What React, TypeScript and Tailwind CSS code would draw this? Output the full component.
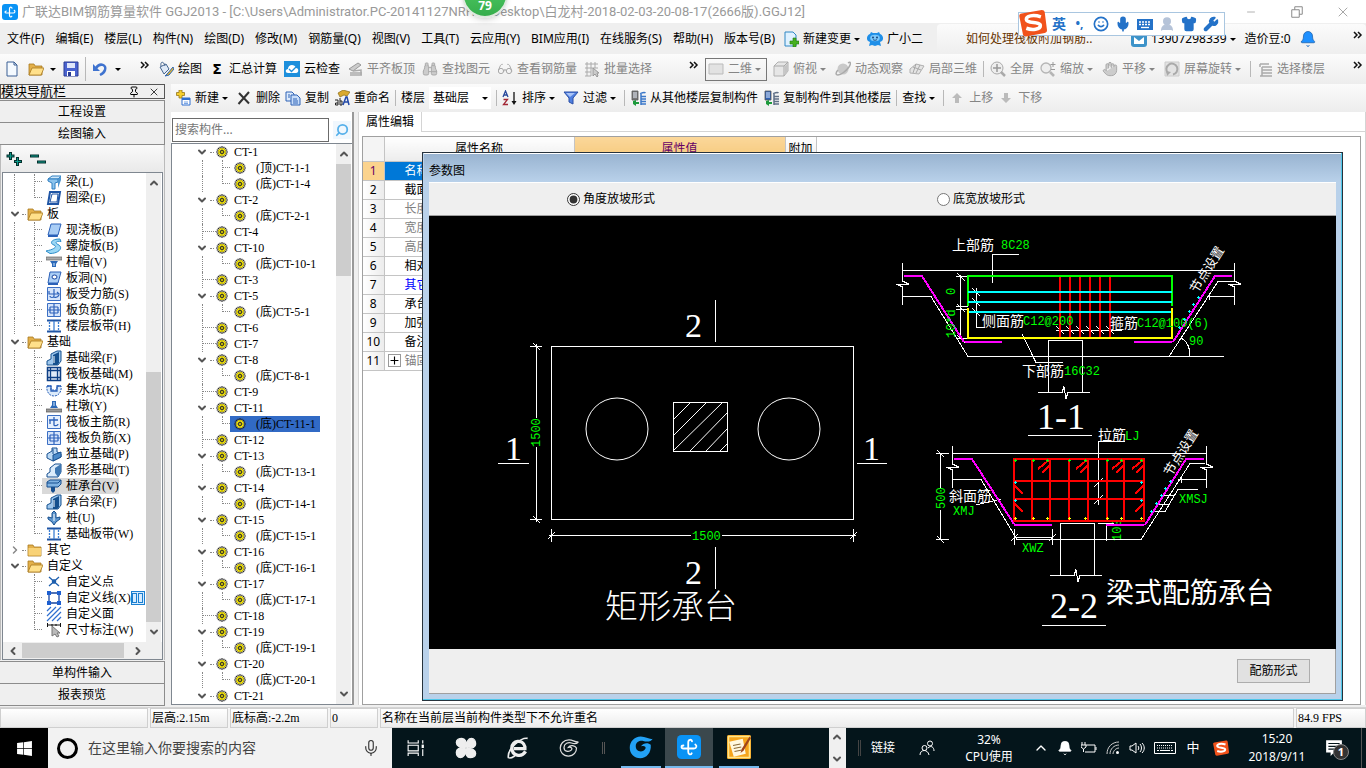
import { useState, type ReactNode } from 'react';
import {
  Bell, Binoculars, ChevronDown, ChevronLeft, ChevronRight, ChevronUp,
  Glasses, Hand, Keyboard, Mic, Minus, Pin, Search,
  Shirt, Smile, UserRound, Wrench, X,
} from 'lucide-react';
import { FaWindows } from 'react-icons/fa';

const SIM = "font-['Liberation_Serif','Noto_Sans_CJK_SC',serif]";

/* ---------- icons ---------- */

const Svg = ({ children, className = 'size-4' }: { children: ReactNode; className?: string }) => (
  <svg viewBox="0 0 16 16" fill="none" className={`${className} shrink-0`} aria-hidden="true">{children}</svg>
);

const Caret = ({ className = '' }: { className?: string }) => (
  <svg viewBox="0 0 12 16" className={`h-4 w-3 shrink-0 ${className}`} aria-hidden="true">
    <path d="M3 7h6l-3 3z" fill="currentColor" />
  </svg>
);

const Logo = ({ className = 'size-4' }: { className?: string }) => (
  <Svg className={className}>
    <rect width="16" height="16" rx="3" fill="#0a93f5" />
    <path d="M10 4.200C9.800 2.700 7.500 2.800 7.500 4.800v6.500c0 1.800 1.800 2 2.300.9" stroke="#fff" strokeWidth="1.200" strokeLinecap="round" />
    <path d="M4.300 7C2.600 7 2.600 9 4.300 9h6.900c2 0 2.200-2 1-2.700" stroke="#fff" strokeWidth="1.200" strokeLinecap="round" />
  </Svg>
);

const Gear = () => (
  <Svg className="size-3">
    <path d="M8 0v16M0 8h16M2.500 2.500l11 11M13.500 2.500l-11 11M5 1l6 14M11 1L5 15M1 5l14 6M15 5L1 11" stroke="#222" strokeWidth="1.500" />
    <circle cx="8" cy="8" r="5.200" fill="#ffee00" />
    <path d="M8 3v10M3 8h10M4.500 4.500l7 7M11.500 4.500l-7 7" stroke="#554" strokeWidth=".9" />
    <circle cx="8" cy="8" r="2" fill="#ffee00" stroke="#222" strokeWidth="1.300" />
  </Svg>
);

const Folder = ({ open }: { open?: boolean }) => (
  <Svg>
    <path d="M1 3h5l1 2h7v9H1z" fill="#e3b04a" stroke="#a8791f" strokeWidth=".8" />
    {open ? <path d="M4 7h12l-3 7H1z" fill="#ffe08a" stroke="#a8791f" strokeWidth=".8" /> : <path d="M1.500 6h12.500v7.500H1.500z" fill="#f8d277" />}
  </Svg>
);

const icons: Record<string, ReactNode> = {
  beam: <><path d="M2 5l4-3h9l-3 3z" fill="#cfe8fb" stroke="#2f7fc1" /><path d="M2 5h10v3l-3 1v6H6V9L2 7z" fill="#8cc4ee" stroke="#2f7fc1" /><path d="M12 5l3-3v4l-3 8z" fill="#4f95cf" /></>,
  ring: <><path d="M4 2h10l-2 12H2z" fill="#fff" stroke="#1f55a5" strokeWidth="2" /><path d="M6 4h6l-1 8H4z" stroke="#1f55a5" /></>,
  slab: <><path d="M5 2h10l-3 11H2z" fill="#a9cdf5" stroke="#2a60b8" /><path d="M2 13h10l-.3 2H2z" fill="#2a60b8" /></>,
  spiral: <path d="M14 1C4 1 4 6 8 7c3 1 2 4-8 6l4 2.500c9 0 14-6 8-9-4-2-1-4 3-3z" fill="#9ad7f5" stroke="#2b8cc9" />,
  cap: <><path d="M0 3h16v3H0z" fill="#aaa" stroke="#666" strokeWidth=".7" /><path d="M4 7h8l-2 3v3H6v-3z" fill="#2c69b8" /><path d="M7.500 9h1v3h-1z" fill="#cfe8fb" /></>,
  hole: <><path d="M4 2h11l-3 11H2z" fill="#a9cdf5" stroke="#2a60b8" /><path d="M2 13h10v2H2z" fill="#2a60b8" /><ellipse cx="8.500" cy="7" rx="2.500" ry="2" fill="#fff" stroke="#1746a0" /></>,
  rebar: <><path d="M1.500 1.500h13v13h-13z" fill="#d6e5fb" stroke="#3b6fc4" /><path d="M3 5v3h10l-2-2M8 3v7c0 2-4 2-4 0M8 11c2 1 4 0 5-2" stroke="#2c61ba" strokeWidth="1.200" /></>,
  negbar: <><path d="M1.500 1.500h13v13h-13z" fill="#d6e5fb" stroke="#3b6fc4" /><path d="M2 8h12M8 2v12M4 5h8M4 5v6M12 5v6M4 11h8" stroke="#2c61ba" strokeWidth="1.200" /></>,
  strip: <><path d="M1 2.500h14M1 13.500h14" stroke="#1f55a5" strokeWidth="2" /><path d="M3.500 4v9M12.500 4v9" stroke="#3b7fd4" strokeWidth="1.300" strokeDasharray="2 1" /><path d="M8 3v10" stroke="#3b7fd4" strokeWidth="1.300" /></>,
  fbeam: <><path d="M1 15v-4l4-2V4l6-3h4v10l-3 4z" fill="#9fc8ee" stroke="#15508e" /><path d="M7 5l6-3v11l-2 2H7z" fill="#15508e" /><path d="M8 6v7" stroke="#fff" /></>,
  raft: <><path d="M1.500 1.500h13v13h-13z" fill="#dfeaf8" stroke="#0d3f85" strokeWidth="1.500" /><path d="M4.500 1v14M11.500 1v14M1 4.500h14M1 11.500h14" stroke="#0d3f85" strokeWidth="1.300" /></>,
  sump: <><path d="M1 4h4v4h6V4h4c1 5-2 10-7 10S0 9 1 4z" fill="#dbeafa" stroke="#2a60b8" strokeDasharray="2 1" /><path d="M1 4h4v5h6V4h4" stroke="#2a60b8" strokeWidth="1.300" /></>,
  pier: <><path d="M0 11h16v3H0z" fill="#999" stroke="#555" strokeWidth=".7" /><path d="M6 3h4v4l2 3H4l2-3z" fill="#2c69b8" /><path d="M7.500 4h1v4h-1z" fill="#cfe8fb" /></>,
  mainbar: <><path d="M1.500 1.500h13v13h-13z" fill="#e6f0fd" stroke="#3b6fc4" /><path d="M3 6h9M8 3v8c0 1 4 1 4-1M4 10V6" stroke="#2c61ba" strokeWidth="1.300" /></>,
  single: <><path d="M1 8l5-3V2h5v4l4 2v3l-8 4-6-3z" fill="#bcdaf5" stroke="#174f8f" /><path d="M7 15V9l8-3v5zM7 3v5" fill="#4b8ac9" stroke="#174f8f" /></>,
  stripf: <><path d="M1 15v-3l3-2V6l5-4h6v8l-3 5z" fill="#dcecfb" stroke="#174f8f" /><path d="M9 6l6-4v9l-3 4-3-4z" fill="#3f78b3" /></>,
  pilecap: <><path d="M1 4l3-2h11v4l-3 3H1z" fill="#7fb2e2" stroke="#174f8f" /><path d="M1 5h11l3-3" stroke="#174f8f" /><path d="M5 9h4v4l-2 2-2-2z" fill="#174f8f" /></>,
  pile: <><path d="M8 1l2 2v5l4-1v2l-4 3-2 3-2-3-4-3V7l4 1V3z" fill="#5f97cf" stroke="#174f8f" /><path d="M8 4v7" stroke="#fff" /></>,
  point: <path d="M3 3l10 9M13 3L3 12M6.500 6h3v3h-3z" stroke="#1d5fae" strokeWidth="1.300" />,
  line: <><path d="M3 3h10v10H3z" stroke="#1746a0" strokeWidth="1.300" /><path d="M1 1h4v4H1zM11 1h4v4h-4zM1 11h4v4H1zM11 11h4v4h-4z" fill="#1d5fd0" /></>,
  area: <path d="M1 5l4-4M1 10l9-9M1 15L15 1M6 15l9-9M11 15l4-4" stroke="#2f6fd0" strokeWidth="1.200" />,
  dim: <><path d="M1 3h14M1.500 1v4M14.500 1v4M6 2v2M10 2v2" stroke="#111" /><path d="M6 4v10l3-2 2 3 2-1-2-3h3z" fill="#bbb" stroke="#777" /></>,
};

const IconNew = () => <Svg><path d="M3 1h7l3 3v11H3z" fill="#f5faff" stroke="#3a5f94" /><path d="M10 1v3h3" stroke="#3a5f94" /></Svg>;
const IconSave = () => <Svg><path d="M1 1h14v14H1z" fill="#4a63cf" stroke="#2a3c94" /><path d="M4 2h8v5H4z" fill="#dfe6fa" /><path d="M4 10h8v5H4z" fill="#fff" /><path d="M5 11h3v4H5z" fill="#2a3c94" /></Svg>;
const IconUndo = () => <Svg><path d="M4 7c4-6 11-3 9 2-1 3-3 4-5 5" stroke="#3f73cf" strokeWidth="2.500" /><path d="M1 3v7h7z" fill="#3f73cf" /></Svg>;
const IconDraw = () => <Svg><path d="M2 6l6-3 3 5-5 5z" fill="#dfe9f6" stroke="#44648f" /><path d="M3 5c-1-5 3-5 4 0" stroke="#44648f" /><path d="M15 6l-5 6-3 3 4-1 5-6z" fill="#e5b52c" stroke="#2e65b5" /></Svg>;
const IconCloud = () => <Svg><path d="M0 0h16v16H0z" fill="#1d8fdc" /><path d="M4 12c-3 0-3-4 0-4 0-5 7-5 8-1 3 0 3 5 0 5z" fill="#fff" /><path d="M5 8l2.500 2.500L12 6" stroke="#1d8fdc" strokeWidth="1.300" /></Svg>;
const IconAlign = () => <Svg><path d="M2 8l9-6 3 2-8 6z" fill="#ccc" stroke="#999" /><path d="M3 12h12M3 14h12M6 10l8-1v5" stroke="#aaa" strokeWidth="1.500" /></Svg>;
const IconBatch = () => <Svg><path d="M1 3h13M1 7h13M1 11h6M1 15h6M3 1v14M7 1v14M11 1v6" stroke="#aaa" /><path d="M9 7v8l2-2 2 3 1-1-1-3h2z" fill="#ccc" stroke="#999" /></Svg>;
const IconCube = () => <Svg><path d="M1 5l4-4h10v9l-4 5H1z" fill="#e6e6e6" stroke="#b0b0b0" /><path d="M1 5h10v10M11 5l4-4" stroke="#a8a8a8" /><path d="M12 5l3-3v8l-3 4z" fill="#c4c4c4" /></Svg>;
const IconOrbit = () => <Svg><circle cx="8" cy="8" r="5.500" fill="#c9c9c9" /><path d="M13 2c3-2 3 1 1 4-3 4-8 8-11 8s-2-3 0-5" stroke="#aaa" strokeWidth="1.500" /></Svg>;
const IconPart = () => <Svg><path d="M1 8l6-5 8 2-5 8-9-1z" fill="#e4e4e4" stroke="#b0b0b0" /><path d="M4 6l8 3M7 3l-3 9M11 4l-4 8" stroke="#a8a8a8" /></Svg>;
const IconFull = () => <Svg><circle cx="7" cy="7" r="6" fill="#eee" stroke="#aaa" /><path d="M7 3v8M3 7h8" stroke="#999" strokeWidth="1.500" /><path d="M11 11l4 4" stroke="#aaa" strokeWidth="2.500" /></Svg>;
const IconZoom = () => <Svg><circle cx="6" cy="7" r="5" fill="#eee" stroke="#b5b5b5" strokeWidth="1.300" /><path d="M10 11l4 4" stroke="#b5b5b5" strokeWidth="2.500" /><path d="M13 1v5M10.500 3.500h5M11 8.500h4" stroke="#999" /></Svg>;
const IconRotate = () => <Svg><path d="M1 1h14v14H1z" fill="#e3e3e3" stroke="#ccc" /><path d="M4 12A5.500 5.500 0 1 1 9 13.500" stroke="#aaa" strokeWidth="2" /><path d="M2 10l5 1-4 4z" fill="#aaa" /></Svg>;
const IconCreate = () => <Svg><path d="M4 0h3v2.500h2.500v3H7V8H4V5.500H1.500v-3H4z" fill="#f5cf2e" stroke="#94761a" strokeWidth=".8" /><path d="M7 8h8v7H7z" fill="#fff" stroke="#2f6fd0" /><path d="M7 8h8v2H7z" fill="#2f6fd0" /><path d="M9 12h4M9 13.500h4" stroke="#7aa6e6" /></Svg>;
const IconDelete = () => <Svg><path d="M3 3l10 10.500M13 2L2.500 14" stroke="#333" strokeWidth="2" /></Svg>;
const IconCopy = () => <Svg><path d="M1 2h6l2 2v7H1z" fill="#dceafc" stroke="#2f62b5" /><path d="M6 5h6l3 3v7H6z" fill="#c7ddfa" stroke="#2f62b5" /><path d="M8 9h4M8 11h5M8 13h5M3 5h2M3 7h2" stroke="#2f62b5" /></Svg>;
const IconRename = () => <Svg><path d="M4 3l5-3 7 2-3 4-3-1-4 2z" fill="#d9a92f" stroke="#8a6a16" strokeWidth=".7" /><path d="M1 10h3v5H1.500v-2H4M6 8v7h2v-4H6" stroke="#222" /><path d="M9 15l3-8h1l2 8M10 12h4" stroke="#2349a8" strokeWidth="1.500" /></Svg>;
const IconFilter = () => <Svg><path d="M1 2h14l-5 6v6l-4-2V8z" fill="#4f7fe0" stroke="#2a4fa5" /><path d="M3 3h9L7 7z" fill="#a9c4f7" /></Svg>;
const IconSort = () => (
  <Svg>
    <path d="M1 7l2.500-6L6 7M2 5h3" stroke="#27489c" strokeWidth="1.300" />
    <path d="M1.500 9.500h4l-4 5h4.500" stroke="#a32836" strokeWidth="1.300" />
    <path d="M12 2v10" stroke="#111" strokeWidth="1.300" /><path d="M9.500 11h5L12 15z" fill="#111" />
  </Svg>
);
const IconFloorCopy = ({ blue }: { blue?: boolean }) => (
  <Svg>
    <path d="M2 1h6v9H2z" fill={blue ? '#2f62b5' : '#777'} stroke="#555" strokeWidth=".8" />
    <path d="M3 3h4M3 5h4M3 7h4" stroke="#e8eefb" />
    <path d="M10.500 4c0-1 4-2 5-1M11 6.500h5M11 9h5M11 11.500h5M11 14h5M11 4v11" stroke={blue ? '#5f6f85' : '#3b78c9'} strokeWidth="1.500" />
    <path d="M3 11l3-1v2h3v2H6v2l-3-2z" fill="#1d9a3c" />
  </Svg>
);
const IconArrow = ({ down }: { down?: boolean }) => (
  <Svg>{down ? <path d="M6 3h4v5h3l-5 5-5-5h3z" fill="#bbb" /> : <path d="M6 13h4V8h3L8 3 3 8h3z" fill="#bbb" />}</Svg>
);
const IconFloors = () => <Svg><path d="M3 3h9M5 6h10M5 9h10M5 12h10M3 15h12M3 3v3M5 6v9" stroke="#aaa" strokeWidth="1.500" /></Svg>;
const IconChange = () => <Svg><path d="M2 1h8l3 3v11H2z" fill="#dff1ff" stroke="#2f87c4" /><path d="M10 7h3v3h3v3h-3v3h-3v-3H7v-3h3z" fill="#46b01e" stroke="#1f7a10" strokeWidth=".6" /></Svg>;
const IconMascot = () => (
  <Svg>
    <path d="M3 3l1-2 2 1h4l2-1 1 2c3 1 4 5 2 7l-2 1 1 4-3-1-3 1-3-1-3 1 1-4-2-1C-1 8 0 4 3 3z" fill="#1f8fe8" />
    <ellipse cx="8" cy="7" rx="4.800" ry="3.300" fill="#7cc8fa" /><circle cx="6" cy="6.500" r=".9" fill="#0c3a75" /><circle cx="10" cy="6.500" r=".9" fill="#0c3a75" />
    <path d="M6 8.500c1 1 3 1 4 0" stroke="#0c3a75" strokeWidth=".8" />
  </Svg>
);
const Sogou = ({ className }: { className: string }) => (
  <Svg className={className}>
    <path d="M1.500 2.500L13 .5c1 0 1.500.5 1.700 1.300L16 12c0 1-.4 1.500-1.300 1.700L4 15.700c-1 .1-1.700-.5-1.800-1.400L.2 4.300C0 3.200.5 2.700 1.500 2.500z" fill="#f1521b" />
    <path d="M12.500 4.500C8 3 4 4 4.200 6c.3 2.500 8 1 8 3.500 0 2.200-4.700 2.700-8 1.500" stroke="#fff" strokeWidth="2" />
  </Svg>
);

/* ---------- data ---------- */

const menus = ['文件(F)', '编辑(E)', '楼层(L)', '构件(N)', '绘图(D)', '修改(M)', '钢筋量(Q)', '视图(V)', '工具(T)', '云应用(Y)', 'BIM应用(I)', '在线服务(S)', '帮助(H)', '版本号(B)'];

type NavGroup = { title?: string; open: boolean; items: [string, string][] };

const navGroups: NavGroup[] = [
  { open: true, items: [['梁(L)', 'beam'], ['圈梁(E)', 'ring']] },
  {
    title: '板', open: true,
    items: [['现浇板(B)', 'slab'], ['螺旋板(B)', 'spiral'], ['柱帽(V)', 'cap'], ['板洞(N)', 'hole'], ['板受力筋(S)', 'rebar'], ['板负筋(F)', 'negbar'], ['楼层板带(H)', 'strip']],
  },
  {
    title: '基础', open: true,
    items: [['基础梁(F)', 'fbeam'], ['筏板基础(M)', 'raft'], ['集水坑(K)', 'sump'], ['柱墩(Y)', 'pier'], ['筏板主筋(R)', 'mainbar'], ['筏板负筋(X)', 'negbar'], ['独立基础(P)', 'single'], ['条形基础(T)', 'stripf'], ['桩承台(V)', 'pilecap'], ['承台梁(F)', 'fbeam'], ['桩(U)', 'pile'], ['基础板带(W)', 'strip']],
  },
  { title: '其它', open: false, items: [] },
  { title: '自定义', open: true, items: [['自定义点', 'point'], ['自定义线(X)', 'line'], ['自定义面', 'area'], ['尺寸标注(W)', 'dim']] },
];

const components: [string, string[]][] = [
  ['CT-1', ['(顶)CT-1-1', '(底)CT-1-4']],
  ['CT-2', ['(底)CT-2-1']],
  ['CT-4', []],
  ['CT-10', ['(底)CT-10-1']],
  ['CT-3', []],
  ['CT-5', ['(底)CT-5-1']],
  ['CT-6', []],
  ['CT-7', []],
  ['CT-8', ['(底)CT-8-1']],
  ['CT-9', []],
  ['CT-11', ['(底)CT-11-1']],
  ['CT-12', []],
  ['CT-13', ['(底)CT-13-1']],
  ['CT-14', ['(底)CT-14-1']],
  ['CT-15', ['(底)CT-15-1']],
  ['CT-16', ['(底)CT-16-1']],
  ['CT-17', ['(底)CT-17-1']],
  ['CT-18', []],
  ['CT-19', ['(底)CT-19-1']],
  ['CT-20', ['(底)CT-20-1']],
  ['CT-21', []],
];

const properties = [
  { name: '名称', color: 'text-white' },
  { name: '截面形状', color: 'text-black' },
  { name: '长度(mm)', color: 'text-[#808080]' },
  { name: '宽度(mm)', color: 'text-[#808080]' },
  { name: '高度(mm)', color: 'text-[#808080]' },
  { name: '相对底标高(m)', color: 'text-black' },
  { name: '其它钢筋', color: 'text-[#0000ff]' },
  { name: '承台单边加强筋', color: 'text-black' },
  { name: '加强筋起步(mm)', color: 'text-black' },
  { name: '备注', color: 'text-black' },
  { name: '锚固搭接', color: 'text-[#808080]' },
];

/* ---------- small parts ---------- */

type ToolProps = { icon?: ReactNode; label: string; muted?: boolean; caret?: boolean };

const Tool = ({ icon, label, muted, caret }: ToolProps) => (
  <button type="button" className={`flex h-6 shrink-0 items-center gap-1 ${muted ? 'text-[#858585]' : 'text-black'}`}>
    {icon}
    <span className="flex items-center">{label}{caret && <Caret />}</span>
  </button>
);

const Sep = () => <span className="h-4 w-px shrink-0 bg-[#b8b8b8]" />;

const More = () => (
  <button type="button" aria-label="更多" className="flex h-6 shrink-0 items-start pt-1">
    <svg viewBox="0 0 10 8" className="h-2 w-[10px]" fill="none" aria-hidden="true">
      <path d="M1 1l3 3-3 3M5 1l3 3-3 3" stroke="#111" strokeWidth="1.500" />
    </svg>
  </button>
);

const Elbow = ({ last, className }: { last: boolean; className: string }) => (
  <span className={`h-4 shrink-0 border-dotted border-[#888] ${last ? '' : 'border-l'} ${className}`}>
    <span className={`block h-2 border-b border-dotted border-[#888] ${last ? 'border-l' : ''}`} />
  </span>
);

const NavButton = ({ label }: { label: string }) => (
  <button type="button" className="h-[22px] w-full border-b border-r border-[#8c8c8c] bg-[#efefef] leading-5">{label}</button>
);

function NavTree() {
  return (
    <ul className={`min-w-0 flex-1 overflow-hidden pt-px whitespace-nowrap ${SIM}`}>
      {navGroups.map((group, g) => (
        <li key={g}>
          {group.title && (
            <div className="flex h-4 items-center pl-[6px]">
              {group.open ? <ChevronDown className="size-3 shrink-0" strokeWidth={4} color="#555" /> : <ChevronRight className="size-3 shrink-0" strokeWidth={3} color="#888" />}
              <span className="mx-px w-1 border-t border-dotted border-[#888]" />
              <Folder open={group.open} />
              <span className="ml-1">{group.title}</span>
            </div>
          )}
          <ul>
            {group.items.map(([label, icon], i) => (
              <li key={label} className="flex h-4 items-center pl-[11px]">
                <span className={`h-4 w-5 shrink-0 border-dotted border-[#888] ${g < 3 ? 'border-l' : ''}`} />
                <Elbow last={i === group.items.length - 1} className="w-2" />
                <span className={`flex h-4 items-center gap-1 pl-1 ${icon === 'pilecap' ? 'bg-[#d9d9d9]' : ''}`}>
                  <Svg>{icons[icon]}</Svg>
                  {label}
                </span>
                {icon === 'line' && (
                  <span className="flex size-[14px] items-center justify-center gap-px border border-[#1a7fd0] bg-[#d6ecff]">
                    <span className="h-[10px] w-[5px] border border-[#1a7fd0]" />
                    <span className="h-[10px] w-[5px] border border-[#1a7fd0]" />
                  </span>
                )}
              </li>
            ))}
          </ul>
        </li>
      ))}
    </ul>
  );
}

function ComponentTree() {
  const [selected, setSelected] = useState('(底)CT-11-1');

  return (
    <ul className={`min-w-0 flex-1 overflow-hidden pl-6 whitespace-nowrap ${SIM}`}>
      {components.map(([name, children]) => (
        <li key={name}>
          <div className="flex h-4 items-center">
            {children.length > 0 || name === 'CT-21' ? (
              <>
                <ChevronDown className="size-3 shrink-0" strokeWidth={4} color="#555" />
                <span className="mx-[2px] w-1 border-t border-dotted border-[#888]" />
              </>
            ) : (
              <span className="flex pl-[6px]"><Elbow last={false} className="w-[14px]" /></span>
            )}
            <Gear />
            <span className="ml-[6px]">{name}</span>
          </div>
          {children.map((child, i) => (
            <div key={child} className="flex h-4 items-center pl-[6px]">
              <span className="h-4 w-5 shrink-0 border-l border-dotted border-[#888]" />
              <Elbow last={i === children.length - 1} className="w-2" />
              <button
                type="button"
                onClick={() => setSelected(child)}
                className={`flex h-4 items-center gap-[10px] pr-1 pl-1 ${selected === child ? 'bg-[#316ac5]' : ''}`}
              >
                <Gear />
                {child}
              </button>
            </div>
          ))}
        </li>
      ))}
    </ul>
  );
}

/* ---------- parametric drawing ---------- */

const Node = ({ x, y }: { x: number; y: number }) => (
  <text transform={`translate(${x} ${y}) rotate(-58)`} fontSize="13" fill="#fff">节点设置</text>
);

const slopeDots1 = [[1198, 297], [1193, 304], [1189, 311], [1184, 319], [1179, 327]];
const slopeDots2 = [[1170, 481], [1165, 488], [1161, 495], [1156, 503], [1151, 511]];
const barXs = [1015, 1033, 1047, 1069, 1085, 1107, 1121, 1141];
const stirrupXs = [1060, 1070, 1080, 1090, 1100, 1110];

function Drawing() {
  return (
    <svg
      viewBox="429 216 907 433"
      className="block h-full w-full font-['Liberation_Mono','Noto_Sans_CJK_SC',monospace]"
      role="img"
      aria-label="矩形承台参数图"
    >
      {/* plan */}
      <g fill="none" stroke="#fff" shapeRendering="crispEdges">
        <path d="M551.500 346.500h302v173h-302zM715.500 300v42M715.500 547v42M498 463.500h31M857 463.500h30" />
        <path d="M536.500 344v74M536.500 447v75M530 346.500h12M530 519.500h12M533 343l7 7M533 516l7 7" />
        <path d="M549 535.500h142M722 535.500h134M551.500 529v13M853.500 529v13M548 539l7-7M850 539l7-7" />
        <path d="M673.500 402.500h54v49h-54z" />
      </g>
      <g fill="none" stroke="#fff">
        <circle cx="617" cy="429" r="31" />
        <circle cx="789" cy="429" r="31" />
        <path d="M674 419l16-16M674 435l32-32M674 450l48-47M690 451l37-38M706 451l21-22M720 451l7-7" />
      </g>
      <g fill="#fff" fontSize="34" className="font-['Liberation_Serif','Noto_Sans_CJK_SC',serif]">
        <text x="685" y="337">2</text>
        <text x="685" y="584">2</text>
        <text x="505" y="460">1</text>
        <text x="863" y="460">1</text>
        <text x="1037" y="429" fontSize="36">1-1</text>
        <text x="1050" y="618" fontSize="36">2-2</text>
        <text x="605" y="618" fontSize="33" fontWeight="300">矩形承台</text>
        <text x="1106" y="603" fontSize="28">梁式配筋承台</text>
      </g>

      {/* section 1-1 */}
      <g fill="none" stroke="#fff" shapeRendering="crispEdges">
        <path d="M902 270.500h332M902.500 263v18l6 3h-12l6 3v18M902 296.500h29L968 356.500h256" />
        <path d="M1234.500 263v18l6 3h-12l6 3v18M1207 296.500h27M1169 356.500l49-75h16M1209.500 293v7" />
        <path d="M992.500 283v-28.500h26M960.500 275v64M956 276.500h12M956 306.500h12M956 309.500h12M956 338.500h12" />
        <path d="M957 273l8 8M957 304l8 8M957 335l8 8M976.500 288v39.500h8M972 288l8 8M972 298l8 8M972 308l8 8" />
        <path d="M1056 330.500h66M1022 334l14 28.500h27M1048.500 392v-51.500h34v51.500M1038 392.500h24l2-6 2 12 2-6h22M1028 435.500h64" />
        {stirrupXs.map((x) => <path key={x} d={`M${x - 4} 326l8 8`} />)}
        <path d="M1181 338c6 3 9 10 9 18" />
      </g>
      <g fill="none" strokeWidth="2" shapeRendering="crispEdges">
        <path d="M904 276h18l42 66M965 342h37M1134 342h38M1173 342l42-66h17" stroke="#f0f" />
        {stirrupXs.map((x) => <path key={x} d={`M${x} 276v62`} stroke="#f00" />)}
        <path d="M968 306v-30h204v30" stroke="#0f0" />
        <path d="M968 292h204M968 302h204M968 312h204" stroke="#0ff" />
        <path d="M968 308v30h204v-30" stroke="#ff0" />
      </g>
      <g fill="#fff" fontSize="14">
        <text x="952" y="250">上部筋</text>
        <text x="982" y="326">侧面筋</text>
        <text x="1110" y="328">箍筋</text>
        <text x="1022" y="376">下部筋</text>
        <text x="1098" y="440">拉筋</text>
        <text x="949" y="501">斜面筋</text>
      </g>
      <g fill="#0f0" fontSize="12">
        <text x="1001" y="249">8C28</text>
        <text x="1023" y="325">C12@200</text>
        <text x="1137" y="327">C12@100(6)</text>
        <text x="1064" y="375">16C32</text>
        <text x="1189" y="345">90</text>
        <text x="1125" y="440">LJ</text>
        <text x="953" y="515">XMJ</text>
        <text x="1179" y="503">XMSJ</text>
        <text x="1022" y="552">XWZ</text>
        <text x="692" y="540">1500</text>
        <text transform="translate(955 295) rotate(-90)">0</text>
        <text transform="translate(955 338) rotate(-90)">10*d</text>
        <text transform="translate(540 447) rotate(-90)">1500</text>
        <text transform="translate(945 509) rotate(-90)">500</text>
        <text transform="translate(1121 541) rotate(-90)">100</text>
      </g>
      <Node x={1197} y={294} />
      <Node x={1171} y={477} />

      {/* section 2-2 */}
      <g fill="none" stroke="#fff" shapeRendering="crispEdges">
        <path d="M952 453.500h254M952.500 446v18l6 3h-12l6 3v18M952 479.500h29l36 60h124l49-76h15" />
        <path d="M1206.500 446v18l6 3h-12l6 3v18M1178 479.500h28M1181.500 476v7" />
        <path d="M940.500 453v35M940.500 510v29M936 453.500h13M936 539.500h13M937 450l7 7M937 536l7 7M976 505l25-6" />
        <path d="M1125 441.500h-26.500V505M1094 487l9-9M1094 504l9-9" />
        <path d="M1198 489.500h-20l-13 22h-14M1175 495.500h-13M1170 504.500h-12" />
        <path d="M1014 537.500h38M1014.500 529v16M1052.500 529v16M1011 541l7-7M1049 541l7-7M1106.500 525v16M1098 523.500h16" />
        <path d="M1060.500 575v-51.500h34v51.500M1050 575.500h24l2-6 2 12 2-6h22M1042 625.500h64" />
      </g>
      <g fill="none" strokeWidth="2" shapeRendering="crispEdges">
        <path d="M954 459h18l42 65M1014 525h38M1106 525h38M1145 525l41-66h18" stroke="#f0f" />
        <path d="M1014 459h130v62h-130zM1014 481h130M1014 499h130M1032 459v62M1050 459v62M1069 459v62M1088 459v62M1107 459v62M1124 459v62" stroke="#f00" />
        <path d="M1038 469l11-9M1042 473l8-8M1076 469l11-9M1080 473l8-8M1112 469l11-9M1116 473l8-8M1132 469l11-9M1136 473l8-8" stroke="#f00" />
        <path d="M1015 486l8 8M1015 504l8 8M1143 486l-8 8M1143 504l-8 8" stroke="#f00" />
      </g>
      {barXs.map((x) => (
        <g key={x}>
          <path d={`M${x - 1} 460.500h3M${x + .5} 459v3`} stroke="#0f0" />
          <path d={`M${x - 1} 518.500h3M${x + .5} 517v3`} stroke="#ff0" />
        </g>
      ))}
      {[...slopeDots1, ...slopeDots2, [1015, 482], [1015, 500], [1141, 482], [1141, 500]].map(([x, y]) => (
        <path key={`${x}-${y}`} d={`M${x - 1} ${y + .5}h3M${x + .5} ${y - 1}v3`} stroke="#0ff" />
      ))}
    </svg>
  );
}

function ParamDialog() {
  const [mode, setMode] = useState('angle');

  return (
    <section
      role="dialog"
      aria-label="参数图"
      className="absolute top-[152px] right-[23px] bottom-[67px] left-[422px] flex flex-col border border-[#26323c] bg-[#b9d1ea] px-[6px] pb-[6px] shadow-[inset_-1px_-1px_0_#4fc7ea]"
    >
      <h2 className="-mx-[5px] h-[29px] shrink-0 border-t border-white bg-linear-to-b from-[#99b4d1] to-[#b9d1ea] px-[5px] pt-2 leading-[18px]">参数图</h2>
      <div className="flex h-[34px] shrink-0 items-center border-t border-b border-t-white border-b-[#a0a0a0] bg-[#efefef]">
        <label className="ml-[138px] flex w-[370px] items-center gap-[3px]">
          <input type="radio" name="slope" className="size-[13px] accent-[#333]" checked={mode === 'angle'} onChange={() => setMode('angle')} />
          角度放坡形式
        </label>
        <label className="flex items-center gap-[3px]">
          <input type="radio" name="slope" className="size-[13px] accent-[#333]" checked={mode === 'width'} onChange={() => setMode('width')} />
          底宽放坡形式
        </label>
      </div>
      <div className="min-h-0 flex-1 bg-black"><Drawing /></div>
      <div className="flex h-[45px] shrink-0 items-center justify-end border-r border-b border-[#a0a0a0] bg-[#efefef] pr-[25px]">
        <button type="button" className="h-6 w-[73px] border border-[#adadad] bg-[#e1e1e1]">配筋形式</button>
      </div>
    </section>
  );
}

/* ---------- bars ---------- */

function TitleBar() {
  return (
    <header className="flex h-[23px] shrink-0 items-center bg-white pl-[2px] text-[#999]">
      <Logo />
      <h1 className="ml-1 flex-1 truncate font-['Roboto','Noto_Sans_CJK_SC',sans-serif] text-[13px]">广联达BIM钢筋算量软件 GGJ2013 - [C:\Users\Administrator.PC-20141127NRHM\Desktop\白龙村-2018-02-03-20-08-17(2666版).GGJ12]</h1>
      <button type="button" aria-label="最小化" className="w-[46px]"><Minus className="mx-auto size-3" strokeWidth={1.500} /></button>
      <button type="button" aria-label="还原" className="w-[46px]">
        <Svg className="mx-auto size-3"><path d="M1 5h10v10H1zM5 5V1h10v10h-4" stroke="#888" strokeWidth="1.300" /></Svg>
      </button>
      <button type="button" aria-label="关闭" className="w-[46px]"><X className="mx-auto size-4" strokeWidth={1.300} /></button>
    </header>
  );
}

function MenuBar() {
  return (
    <nav className="flex h-[31px] shrink-0 items-center bg-[#efefef] pl-[7px] whitespace-nowrap">
      <div className="flex items-center gap-[11px]">
        {menus.map((item) => <button type="button" key={item}>{item}</button>)}
      </div>
      <div className="ml-2 flex items-center gap-1">
        <Tool icon={<IconChange />} label="新建变更" caret />
        <Tool icon={<IconMascot />} label="广小二" />
      </div>
      <div className="ml-auto flex h-[29px] w-[429px] shrink-0 items-center rounded-sm bg-linear-to-b from-[#fbfbfb] to-[#efefef] pr-[3px]">
        <a href="#tip" className="ml-[29px] w-[165px] text-[#663300]">如何处理筏板附加钢筋..</a>
        <button type="button" className="flex items-center gap-1">
          <Svg><rect width="16" height="16" rx="3" fill="#3d93c9" /><path d="M3 6l5 4 5-4v7H3z" fill="#fff" /></Svg>
          <span className="flex items-center">13907298339<Caret /></span>
        </button>
        <span className="ml-[6px]">造价豆:0</span>
        <Bell className="ml-2 size-[18px]" fill="#1e90ff" color="#1c5fa8" strokeWidth={1} />
        <span className="ml-auto"><More /></span>
      </div>
    </nav>
  );
}

function MainToolbar() {
  const gray = { className: 'size-4 shrink-0', color: '#aaa', strokeWidth: 1.5 };
  return (
    <div className="flex h-[30px] shrink-0 items-center bg-linear-to-b from-[#fcfcfc] to-[#ededed] whitespace-nowrap">
      <div className="flex w-[158px] shrink-0 items-center pl-1">
        <button type="button" aria-label="新建工程"><IconNew /></button>
        <button type="button" aria-label="打开" className="ml-2 flex items-center"><Folder open /><Caret className="ml-[3px]" /></button>
        <button type="button" aria-label="保存" className="ml-1"><IconSave /></button>
        <span className="mx-[6px] h-6 w-px bg-[#b8b8b8]" />
        <button type="button" aria-label="撤销" className="flex items-center"><IconUndo /><Caret className="ml-1" /></button>
        <span className="ml-4"><More /></span>
      </div>
      <div className="flex w-[547px] shrink-0 items-center gap-[7px]">
        <Tool icon={<IconDraw />} label="绘图" />
        <Tool icon={<span className="w-4 text-center font-['DejaVu_Sans',sans-serif] text-sm font-bold">Σ</span>} label="汇总计算" />
        <Tool icon={<IconCloud />} label="云检查" />
        <Tool icon={<IconAlign />} label="平齐板顶" muted />
        <Tool icon={<Binoculars {...gray} fill="#ccc" />} label="查找图元" muted />
        <Tool icon={<Glasses {...gray} />} label="查看钢筋量" muted />
        <Tool icon={<IconBatch />} label="批量选择" muted />
        <span className="mr-[6px] ml-auto"><More /></span>
      </div>
      <div className="flex min-w-0 flex-1 items-center gap-[6px]">
        <span className="flex h-[23px] w-[62px] items-center border border-[#777] pl-[2px]">
          <Tool icon={<Svg><path d="M1 3h14v10H1z" fill="#e2e2e2" stroke="#bbb" /></Svg>} label="二维" muted caret />
        </span>
        <Tool icon={<IconCube />} label="俯视" muted caret />
        <Tool icon={<IconOrbit />} label="动态观察" muted />
        <Tool icon={<IconPart />} label="局部三维" muted />
        <Sep />
        <Tool icon={<IconFull />} label="全屏" muted />
        <Tool icon={<IconZoom />} label="缩放" muted caret />
        <Tool icon={<Hand {...gray} fill="#ccc" />} label="平移" muted caret />
        <Tool icon={<IconRotate />} label="屏幕旋转" muted caret />
        <Sep />
        <Tool icon={<IconFloors />} label="选择楼层" muted />
        <span className="mr-[3px] ml-auto"><More /></span>
      </div>
    </div>
  );
}

function ComponentToolbar() {
  return (
    <div className="flex h-7 shrink-0 items-center gap-[5px] bg-linear-to-b from-[#fbfbfb] to-[#ededed] pl-1 whitespace-nowrap">
      <Tool icon={<IconCreate />} label="新建" caret />
      <Tool icon={<IconDelete />} label="删除" />
      <Tool icon={<IconCopy />} label="复制" />
      <Tool icon={<IconRename />} label="重命名" />
      <Sep />
      <label className="flex items-center">
        楼层
        <span className="relative ml-1 flex items-center">
          <select className="h-[22px] w-[62px] appearance-none bg-white pl-1" defaultValue="base">
            <option value="base">基础层</option>
            <option value="first">首层</option>
          </select>
          <Caret className="pointer-events-none absolute right-0" />
        </span>
      </label>
      <Sep />
      <Tool icon={<IconSort />} label="排序" caret />
      <Tool icon={<IconFilter />} label="过滤" caret />
      <Sep />
      <Tool icon={<IconFloorCopy />} label="从其他楼层复制构件" />
      <Tool icon={<IconFloorCopy blue />} label="复制构件到其他楼层" />
      <Sep />
      <Tool label="查找" caret />
      <Sep />
      <Tool icon={<IconArrow />} label="上移" muted />
      <Tool icon={<IconArrow down />} label="下移" muted />
    </div>
  );
}

function StatusBar() {
  const cell = 'shrink-0 border border-[#cfcfcf] bg-linear-to-b from-white to-[#ececec] px-px';
  return (
    <footer className={`flex h-[20px] shrink-0 gap-[2px] bg-[#f4f4f4] leading-[18px] ${SIM}`}>
      <span className={`${cell} w-[148px]`} />
      <span className={`${cell} w-[78px]`}>层高:2.15m</span>
      <span className={`${cell} w-[98px]`}>底标高:-2.2m</span>
      <span className={`${cell} w-[48px]`}>0</span>
      <span className={`${cell} flex-1`}>名称在当前层当前构件类型下不允许重名</span>
      <span className={`${cell} w-[70px]`}>84.9 FPS</span>
    </footer>
  );
}

function TaskBar() {
  return (
    <div className="flex h-10 shrink-0 items-center bg-[#04151b] text-white">
      <button type="button" aria-label="开始" className="flex h-10 w-12 items-center justify-center bg-black"><FaWindows className="size-[17px]" /></button>
      <label className="flex h-10 w-[344px] items-center bg-[#f2f2f2] pr-3 pl-[9px]">
        <span className="size-[21px] shrink-0 rounded-full border-3 border-black" />
        <input className="ml-[10px] min-w-0 flex-1 text-sm text-black placeholder:text-[#444]" placeholder="在这里输入你要搜索的内容" aria-label="搜索" />
        <Mic className="size-[18px]" color="#333" strokeWidth={1.500} />
      </label>
      <button type="button" aria-label="任务视图" className="flex w-12 justify-center">
        <Svg className="size-[18px]"><path d="M1 1v2.500h9V1M1 15v-2.500h9V15M1 5.500h9v5H1zM14 1v3M14 9v6" stroke="#fff" /><path d="M13 5h2v3h-2z" fill="#fff" /></Svg>
      </button>
      <button type="button" aria-label="四叶草" className="flex w-[52px] justify-center">
        <Svg className="size-[22px]">
          <path d="M7.500 7.500C3 8 1 6 1 4s2-3 4-3 4 2 2.500 6.500zM8.500 7.500C8 3 10 1 12 1s3 2 3 4-2 4-6.500 2.500zM8.500 8.500C13 8 15 10 15 12s-2 3-4 3-4-2-2.500-6.500zM7.500 8.500C8 13 6 15 4 15s-3-2-3-4 2-4 6.500-2.500z" fill="#eee" stroke="#eee" />
        </Svg>
      </button>
      <button type="button" aria-label="浏览器" className="flex w-[52px] justify-center">
        <Svg className="size-[22px]"><path d="M13.500 10.500c-3 5-10 3-10-2.500s8-7 9.500-1v1.500H5" stroke="#eee" strokeWidth="2.400" /><path d="M15 1c-4-1-15 7-14 14 2 1 4-1 5-1.500" stroke="#eee" strokeWidth="1.200" /></Svg>
      </button>
      <button type="button" aria-label="广联达G" className="flex w-[50px] justify-center">
        <Svg className="size-[20px]"><path d="M15.500 3c-2 1-4-1.500-7.500-1.500C3.500 1.500 1 5 1 8s2 6.500 6.500 6.500S14 11 14 8c-1-2-5-3-6.500-.5 2-.5 3.500.5 2.500 2C7.500 12 4 10.500 4 7.500S7.500 3 10 4s4 1 5.500-1z" stroke="#ddd" /></Svg>
      </button>
      <span className="mx-2 h-3 w-[3px] border-x border-[#555]" />
      <button type="button" aria-label="广联达服务" className="ml-2 flex h-10 w-10 items-center justify-center border-b-2 border-[#76b9ed]">
        <Svg className="size-6"><path d="M15.800 2.500c-2 .8-4.300-1.500-8-1.500C3.500 1 .5 4.500.5 8.500s3 7 7 7 7.500-3.500 7-9c-1.500-1.500-5-1.500-6.500 1 2-.5 3.500 0 3 1.500-1.500 3-6.500 2.500-6.500-1.500 0-3 3-4 5-3.500 2.500.7 5.300.5 6.300-1.500z" fill="#22a1f5" /></Svg>
      </button>
      <button type="button" aria-label="广联达GGJ" className="ml-1 flex h-10 w-12 items-center justify-center border-b-2 border-[#76b9ed] bg-[#3b484d]"><Logo className="size-6" /></button>
      <button type="button" aria-label="记事" className="ml-[6px] flex h-10 w-10 items-center justify-center border-b-2 border-[#76b9ed]">
        <Svg className="size-6"><rect width="16" height="16" rx="1" fill="#f6a51c" /><path d="M1 1h14v14H1z" stroke="#ffe58a" /><path d="M1.500 4.500l9-2 2 10-8 2z" fill="#fff8e0" /><path d="M4 7l5-1M4.500 9l5-1M5 11l5-1" stroke="#8a6a3a" strokeWidth=".8" /><path d="M15 1l-5 8-1 3 2-1.500L16 2z" fill="#a0451a" /></Svg>
      </button>
      <div className="ml-auto flex h-10 w-[17px] flex-col items-center justify-between bg-[#f0f0f0] py-[3px]">
        <ChevronUp className="size-3" strokeWidth={4} color="#555" />
        <ChevronDown className="size-3" strokeWidth={4} color="#555" />
      </div>
      <span className="ml-3 h-4 w-[3px] border-x border-[#444]" />
      <span className="ml-[10px]">链接</span>
      <Svg className="ml-6 size-4"><circle cx="11" cy="3.500" r="2.500" stroke="#fff" /><circle cx="5.500" cy="8" r="2.500" stroke="#fff" /><path d="M1 15c0-6 8-6 9 0M9 8c3-3 6-1 6 3" stroke="#fff" /></Svg>
      <span className="ml-6 w-[60px] text-center leading-[17px]">32%<br />CPU使用</span>
      <div className="ml-[14px] flex items-center gap-2">
        <ChevronUp className="size-4" strokeWidth={2} />
        <Bell className="size-4" fill="#fff" strokeWidth={1} />
        <Svg><path d="M5 5h9v7H4M15 7v3" stroke="#fff" /><path d="M1 2v3M4 2v3M0 5h5v2L2.500 9 0 7zM2.500 9v3" stroke="#fff" /></Svg>
        <Svg><path d="M2 14C2 7 7 2 14 2M5 14c0-5 4-9 9-9M8 14c0-3 3-6 6-6" stroke="#ccc" /><circle cx="12.500" cy="12.500" r="1.500" fill="#fff" /></Svg>
        <Svg><path d="M1 6h2l4-3v10l-4-3H1zM9 6c1 1 1 3 0 4M11 4c2 2 2 6 0 8M13 3c3 3 3 7 0 10" stroke="#fff" /></Svg>
        <svg viewBox="0 0 24 16" className="h-4 w-6 shrink-0" fill="none" aria-hidden="true">
          <path d="M1.500 2.500h21v11h-21z" stroke="#fff" />
          <path d="M4 5.500h16M4 8h16" stroke="#fff" strokeDasharray="1 1" /><path d="M4 10.500h2M7 10.500h10M18 10.500h2" stroke="#fff" />
        </svg>
        <span className="w-4 text-center text-[13px]">中</span>
        <Sogou className="ml-1 size-4" />
      </div>
      <span className="ml-[14px] w-[68px] text-center leading-[18px]">15:20<br />2018/9/11</span>
      <button type="button" aria-label="通知" className="relative ml-[14px] size-6">
        <Svg className="size-[18px]"><path d="M1 1h14v11H8l-3 3v-3H1z" fill="#fff" /><path d="M3 4h10M3 6.500h10M3 9h6" stroke="#04151b" /></Svg>
        <span className="absolute top-2 left-2 size-4 rounded-full border border-[#888] bg-[#333] text-center text-[11px] leading-[14px] font-bold">1</span>
      </button>
      <span className="mr-1 ml-[12px] h-10 w-px bg-[#555]" />
    </div>
  );
}

function ImeBar() {
  const blue = { className: 'size-4 shrink-0', color: '#2472c8' };
  return (
    <div className="absolute top-[12px] right-[141px] flex h-6 w-[207px] items-center gap-[6px] border border-[#a9c6e0] bg-white pl-[33px] text-[#2472c8]">
      <Sogou className="absolute -top-1 left-0 size-7" />
      <span className="text-sm font-bold">英</span>
      <span className="w-[15px] text-center font-bold">•,</span>
      <Smile {...blue} strokeWidth={2.500} />
      <Mic {...blue} fill="#2472c8" strokeWidth={2.500} />
      <Svg><path d="M0 3h16v11H0z" fill="#2472c8" /><path d="M2 6h12M2 8.500h12" stroke="#fff" strokeWidth="1.300" strokeDasharray="2 1" /><path d="M4 11.500h8" stroke="#fff" strokeWidth="1.300" /></Svg>
      <UserRound {...blue} color="#b5c3d8" fill="#b5c3d8" />
      <Shirt {...blue} fill="#2472c8" />
      <Wrench {...blue} fill="#2472c8" />
    </div>
  );
}

/* ---------- panels ---------- */

function NavPanel() {
  return (
    <aside className="flex w-[165px] shrink-0 flex-col">
      <div className={`flex h-[15px] shrink-0 items-center border border-[#555] text-[13px] leading-[13px] ${SIM}`}>
        <h2 className="flex-1">模块导航栏</h2>
        <Pin className="mr-2 size-3" strokeWidth={2} />
        <X className="mr-1 size-3" strokeWidth={1.500} />
      </div>
      <div className="mt-px border-t border-[#8c8c8c]">
        <NavButton label="工程设置" />
        <NavButton label="绘图输入" />
      </div>
      <div className="flex min-h-0 flex-1 flex-col border-x border-[#bbb] px-px">
        <div className="flex h-[27px] shrink-0 items-center gap-2 bg-linear-to-b from-[#fafafa] to-[#e9e9e9] pl-1">
          <button type="button" aria-label="展开"><Svg><path d="M4.500 1v8M.5 5h8M11.500 6v9M8 10.500h8" stroke="#042f2c" strokeWidth="3" /><path d="M4.500 2v6M1.500 5h6M11.500 7v7M9 10.500h6" stroke="#0c9a8a" /></Svg></button>
          <button type="button" aria-label="折叠"><Svg><path d="M0 5h9M7 11h9" stroke="#042f2c" strokeWidth="3" /><path d="M1 5h7M8 11h7" stroke="#0c9a8a" /></Svg></button>
        </div>
        <div className="flex min-h-0 flex-1 flex-col border border-[#7f8790] bg-white">
          <div className="flex min-h-0 flex-1">
            <NavTree />
            <div className="mr-px flex w-[15px] shrink-0 flex-col items-center bg-[#efefef] py-1">
              <ChevronUp className="size-3" strokeWidth={4} color="#555" />
              <span className="mt-auto h-[250px] w-full bg-[#cdcdcd]" />
              <ChevronDown className="mt-1 size-3" strokeWidth={4} color="#555" />
            </div>
          </div>
          <div className="flex h-[17px] shrink-0 items-center bg-[#efefef] pl-1">
            <ChevronLeft className="size-3" strokeWidth={4} color="#555" />
            <span className="ml-[3px] h-[15px] w-[102px] bg-[#cdcdcd]" />
            <ChevronRight className="ml-2 size-3" strokeWidth={4} color="#555" />
          </div>
        </div>
      </div>
      <div className="mt-px border-t border-[#8c8c8c]">
        <NavButton label="单构件输入" />
        <NavButton label="报表预览" />
      </div>
    </aside>
  );
}

function ComponentPanel() {
  return (
    <section className="flex w-[183px] shrink-0 flex-col border-r-2 border-[#999] bg-[#efefef]">
      <div className="flex h-[31px] shrink-0 items-center bg-white pt-1">
        <input className="ml-px h-6 w-[157px] border border-[#6b6b6b] bg-white px-[2px] placeholder:text-[#777]" placeholder="搜索构件..." aria-label="搜索构件" />
        <button type="button" aria-label="搜索" className="ml-1 flex size-[18px] items-center justify-center bg-[#f0f7fd]"><Search className="size-[14px] -scale-x-100" color="#56b0ea" strokeWidth={3} /></button>
      </div>
      <div className="flex min-h-0 flex-1 border-t border-b border-l border-[#7f8790] bg-white">
        <ComponentTree />
        <div className="mr-px flex w-[15px] shrink-0 flex-col items-center bg-[#efefef] py-1">
          <ChevronUp className="size-3" strokeWidth={4} color="#555" />
          <span className="mt-1 h-28 w-full bg-[#cdcdcd]" />
          <ChevronDown className="mt-auto size-3" strokeWidth={4} color="#555" />
        </div>
      </div>
    </section>
  );
}

function PropertyPanel() {
  const cell = 'border-r border-b border-[#c4c4c4]';
  return (
    <section className="ml-1 flex min-w-0 flex-1 flex-col border-x border-[#d4d4d4] bg-white">
      <div className="flex h-5 shrink-0">
        <button type="button" role="tab" className="w-[63px] border-r border-[#d4d4d4] bg-white">属性编辑</button>
        <span className="flex-1 border-b border-[#d4d4d4]" />
      </div>
      <div className="mt-1 mr-1 ml-[3px] min-h-0 flex-1 overflow-hidden border border-[#a0a0a0]">
        <table className="table-fixed border-collapse leading-[18px]">
          <colgroup>
            <col className="w-[21px]" />
            <col className="w-[190px]" />
            <col className="w-[211px]" />
            <col className="w-[31px]" />
          </colgroup>
          <thead>
            <tr className="h-6">
              <th className={`${cell} bg-[#f4f4f4]`} />
              <th className={`${cell} bg-linear-to-b from-white to-[#ececec] font-normal`}>属性名称</th>
              <th className={`${cell} bg-linear-to-b from-[#fbd79a] to-[#f5c878] font-normal text-[#660066]`}>属性值</th>
              <th className={`${cell} bg-linear-to-b from-white to-[#ececec] font-normal whitespace-nowrap`}>附加</th>
            </tr>
          </thead>
          <tbody>
            {properties.map((p, i) => (
              <tr key={p.name} className="h-[19px]">
                <th className={`${cell} font-normal ${i === 0 ? 'bg-[#fbd38d] text-[#660066]' : 'bg-linear-to-r from-white to-[#ececec]'}`}>{i + 1}</th>
                <td className={`${cell} ${p.color} ${i === 0 ? 'bg-[#0078d7]' : ''}`}>
                  <span className="flex items-center whitespace-nowrap">
                    <span className="flex w-5 shrink-0 pl-[3px]">
                      {i === 10 && <span className="flex size-[13px] items-center justify-center border border-[#999] text-black"><Svg className="size-[9px]"><path d="M1 8h14M8 1v14" stroke="#000" strokeWidth="2" /></Svg></span>}
                    </span>
                    {p.name}
                  </span>
                </td>
                <td className={cell} />
                <td className={cell} />
              </tr>
            ))}
          </tbody>
        </table>
      </div>
    </section>
  );
}

export default function App() {
  return (
    <div className="relative flex h-screen flex-col overflow-hidden bg-[#efefef] font-['Noto_Sans','Noto_Sans_CJK_SC',sans-serif] text-xs text-black">
      <TitleBar />
      <MenuBar />
      <MainToolbar />
      <main className="flex min-h-0 flex-1 border-b border-[#d4d4d4] pb-px">
        <NavPanel />
        <div className="ml-[6px] flex min-w-0 flex-1 flex-col">
          <ComponentToolbar />
          <div className="flex min-h-0 flex-1 pb-px">
            <ComponentPanel />
            <PropertyPanel />
          </div>
        </div>
      </main>
      <StatusBar />
      <TaskBar />
      <ParamDialog />
      <ImeBar />
      {/* memory usage ball */}
      <div className="absolute -top-7 left-[462px] flex size-[46px] items-end justify-center rounded-full border-2 border-[#dfe8df] bg-linear-to-b from-[#57d36a] to-[#35ad4c] pb-[2px] text-xs leading-4 font-bold text-white shadow-md">79</div>
    </div>
  );
}
